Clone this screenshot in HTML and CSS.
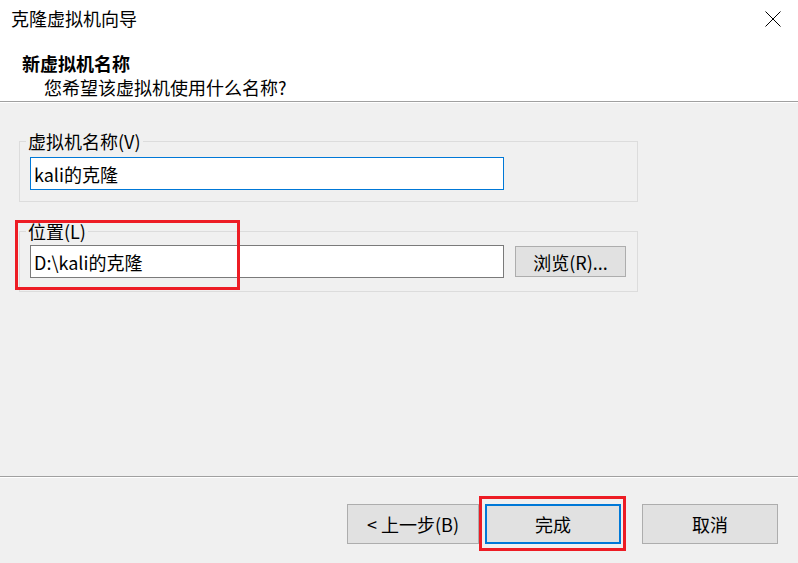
FILE: index.html
```html
<!DOCTYPE html>
<html lang="zh-CN">
<head>
    <meta charset="UTF-8">
    <title>克隆虚拟机向导</title>
    <link rel="stylesheet" href="styles.css">
</head>
<body>

<!-- Header with title and step description -->
<div class="header">
    <div class="title-row">
        <span class="title">克隆虚拟机向导</span>
        <svg class="close" width="16" height="16" viewBox="0 0 16 16">
            <path d="M0.5 0.5 L15.5 15.5 M15.5 0.5 L0.5 15.5" stroke="#000" stroke-width="1" fill="none"/>
        </svg>
    </div>
    <div class="step-title">新虚拟机名称</div>
    <div class="step-desc">您希望该虚拟机使用什么名称?</div>
</div>

<!-- Form content -->
<div class="content">
    <fieldset class="group">
        <legend>虚拟机名称(V)</legend>
        <div class="field-row">
            <input class="text-input focused" type="text" value="kali的克隆">
        </div>
    </fieldset>

    <div class="marked">
        <fieldset class="group group-location">
            <legend>位置(L)</legend>
            <div class="field-row">
                <input class="text-input" type="text" value="D:\kali的克隆">
                <button class="btn browse">浏览(R)...</button>
            </div>
        </fieldset>
        <div class="mark mark-location"></div>
    </div>
</div>

<!-- Footer buttons -->
<div class="footer">
    <button class="btn btn-prev">&lt; 上一步(B)</button>
    <div class="marked done-wrap">
        <button class="btn btn-done">完成</button>
        <div class="mark mark-done"></div>
    </div>
    <button class="btn btn-cancel">取消</button>
</div>

</body>
</html>
```

FILE: styles.css
```css
* {
    box-sizing: border-box;
}

body {
    font-family: "Noto Sans CJK SC", "Noto Sans", sans-serif;
    font-size: 18px;
    color: #000;
    margin: 0;
    width: 798px;
    height: 563px;
    background-color: #f0f0f0;
    display: flex;
    flex-direction: column;
    overflow: hidden;
}

.header {
    background-color: #fff;
    height: 102px;
    border-bottom: 1px solid #a0a0a0;
    padding-top: 6px;
}

.title-row {
    display: flex;
    justify-content: space-between;
    align-items: center;
    height: 24px;
    padding: 0 17px 0 11px;
    line-height: 24px;
}

.close {
    display: block;
    margin-top: 2px;
}

.step-title {
    font-weight: bold;
    line-height: 24px;
    margin-top: 21px;
    padding-left: 22px;
}

.step-desc {
    line-height: 24px;
    padding-left: 44px;
}

.content {
    flex: 1;
    border-top: 1px solid #fff;
    padding: 28px 0 0 19px;
}

.group {
    width: 619px;
    margin: 0;
    border: 1px solid #dcdcdc;
    padding: 6px 10px 11px 10px;
}

.group-location {
    padding-top: 4px;
    padding-bottom: 13px;
}

.group legend {
    padding: 0 2px;
    margin-left: -4px;
    line-height: 20px;
}

.marked {
    position: relative;
}

.content .marked {
    margin-top: 19px;
    width: 619px;
}

.field-row {
    display: flex;
    align-items: center;
}

.text-input {
    width: 474px;
    height: 33px;
    border: 1px solid #7a7a7a;
    background: #fff;
    font-family: inherit;
    font-size: 18px;
    padding: 0 3px;
    margin: 0;
    outline: none;
    color: #000;
}

.text-input.focused {
    border-color: #0078d7;
}

.btn {
    font-family: inherit;
    font-size: 18px;
    color: #000;
    background-color: #e1e1e1;
    border: 1px solid #adadad;
    padding: 0;
    margin: 0;
}

.browse {
    width: 111px;
    height: 31px;
    margin-left: 11px;
}

/* Red annotation boxes drawn over the dialog */
.mark {
    position: absolute;
    border: 3px solid #ed1c24;
    pointer-events: none;
}

.mark-location {
    left: -4px;
    top: -1px;
    width: 225px;
    height: 70px;
}

.footer {
    height: 87px;
    border-top: 1px solid #a0a0a0;
    box-shadow: inset 0 1px 0 #fff;
    display: flex;
    align-items: flex-start;
    padding: 27px 20px 0 347px;
}

.btn-prev {
    width: 132px;
    height: 40px;
}

.done-wrap {
    margin-left: 6px;
}

.btn-done {
    display: block;
    width: 136px;
    height: 40px;
    border: 2px solid #0078d7;
}

.mark-done {
    top: -8px;
    left: -6px;
    right: -5px;
    bottom: -7px;
}

.btn-cancel {
    width: 136px;
    height: 40px;
    margin-left: 21px;
}
```
